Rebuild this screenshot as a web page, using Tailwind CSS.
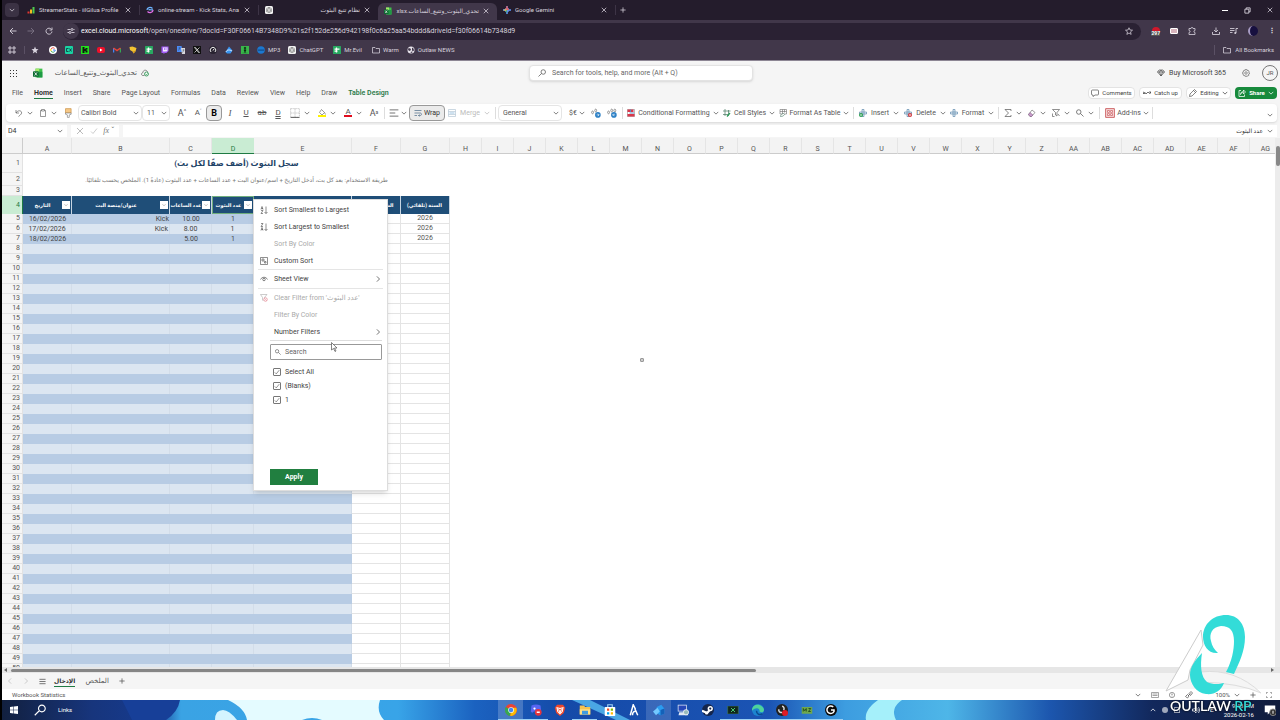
<!DOCTYPE html>
<html lang="en">

<head>
    <meta charset="UTF-8">
    <meta name="viewport" content="width=device-width, initial-scale=1.0">
    <title>تحدي_البثوث_وتتبع_الساعات.xlsx</title>
    <script src="https://cdn.jsdelivr.net/npm/@tailwindcss/browser@4"></script>
</head>

<body class="h-screen overflow-hidden flex flex-col relative bg-[#f5f5f5] text-[#555] text-[7px] leading-[10px] font-['Roboto','Noto_Sans','DejaVu_Sans',sans-serif] border-l-2 border-black">

    <!-- Icons -->
    <svg class="hidden">
        <symbol id="chev" viewBox="0 0 16 16"><path d="M2 5l6 6 6-6" fill="none" stroke="currentColor" stroke-width="2" /></symbol>
        <symbol id="right" viewBox="0 0 16 16"><path d="M5 1l7 7-7 7" fill="none" stroke="currentColor" stroke-width="2" /></symbol>
        <symbol id="left" viewBox="0 0 16 16"><path d="M11 1L4 8l7 7" fill="none" stroke="currentColor" stroke-width="2" /></symbol>
        <symbol id="close" viewBox="0 0 16 16"><path d="M2 2l12 12M14 2L2 14" stroke="currentColor" stroke-width="2" /></symbol>
        <symbol id="plus" viewBox="0 0 16 16"><path d="M8 1v14M1 8h14" stroke="currentColor" stroke-width="2" /></symbol>
        <symbol id="search" viewBox="0 0 16 16"><path d="M9 9l6 6M10 6a4.500 4.500 0 1 1-9 0a4.500 4.500 0 1 1 9 0z" fill="none" stroke="currentColor" stroke-width="1.500" /></symbol>
        <symbol id="searchl" viewBox="0 0 16 16"><path d="M7 9l-6 6M15 6a4.500 4.500 0 1 1-9 0a4.500 4.500 0 1 1 9 0z" fill="none" stroke="currentColor" stroke-width="1.500" /></symbol>
        <symbol id="back" viewBox="0 0 16 16"><path d="M15 8H2M8 2L2 8l6 6" fill="none" stroke="currentColor" stroke-width="1.800" /></symbol>
        <symbol id="fwd" viewBox="0 0 16 16"><path d="M1 8h13M8 2l6 6-6 6" fill="none" stroke="currentColor" stroke-width="1.800" /></symbol>
        <symbol id="reload" viewBox="0 0 16 16"><path d="M13 5A6 6 0 1 0 14 9M14 1v5H9" fill="none" stroke="currentColor" stroke-width="1.800" /></symbol>
        <symbol id="tune" viewBox="0 0 16 16"><path d="M1 5h6M13 5h2M1 11h3M9 11h6M12 5a2 2 0 1 1-4 0a2 2 0 1 1 4 0zM8 11a2 2 0 1 1-4 0a2 2 0 1 1 4 0z" fill="none" stroke="currentColor" stroke-width="1.800" /></symbol>
        <symbol id="grid4" viewBox="0 0 16 16"><path d="M2 2h4v4H2zM10 2h4v4h-4zM2 10h4v4H2zM10 10h4v4h-4z" fill="none" stroke="currentColor" stroke-width="1.800" /></symbol>
        <symbol id="star" viewBox="0 0 16 16"><path d="M8 1l2 5 5 .4-4 3.400 1.300 5L8 12l-4.300 2.800 1.300-5-4-3.400L6 6z" fill="currentColor" /></symbol>
        <symbol id="staro" viewBox="0 0 16 16"><path d="M8 1.500l2 4.500 5 .4-4 3.400 1.300 5L8 12l-4.300 2.800 1.300-5-4-3.400L6 6z" fill="none" stroke="currentColor" stroke-width="1.500" /></symbol>
        <symbol id="folder" viewBox="0 0 16 16"><path d="M1 3h5l2 2h7v9H1z" fill="none" stroke="currentColor" stroke-width="1.500" /></symbol>
        <symbol id="globe" viewBox="0 0 16 16"><circle cx="8" cy="8" r="7" fill="#e8e4ec" /><path d="M3 4l4 1 1 3-3 2-3-2zM10 3l3 2 1 4-3 2-1-3zM7 12l3-1 1 2-3 1z" fill="#41374a" /></symbol>
        <symbol id="stats" viewBox="0 0 16 16"><path d="M1 11h4v4H1z" fill="#e3342f" /><path d="M6 7h4v8H6z" fill="#f5b921" /><path d="M11 2h4v13h-4z" fill="#4ec94e" /></symbol>
        <symbol id="gpt" viewBox="0 0 16 16"><rect width="16" height="16" rx="3" fill="#f1f1f1" /><path d="M8 2.500l4.800 2.700v5.600L8 13.500l-4.800-2.700V5.200zM8 5l2.600 1.500v3L8 11 5.400 9.500v-3zM8 2.500V5M12.800 10.800L10.600 9.500M3.200 10.800l2.200-1.300" fill="none" stroke="#555" stroke-width="1" /></symbol>
        <symbol id="sync" viewBox="0 0 16 16"><path d="M2 8c0-5 7-7 11-3M5 8c3-3 6 2 9-1" fill="none" stroke="#6db4ff" stroke-width="2.500" /><path d="M14 8c0 5-7 7-11 3" fill="none" stroke="#e26ee8" stroke-width="2.500" /></symbol>
        <symbol id="xl" viewBox="0 0 16 16"><path d="M4 1h11v14H4z" fill="#3fc14b" /><path d="M4 1h6v5H4z" fill="#a5e86a" /><path d="M9 6h6v9H6z" fill="#1e9a45" /><rect y="5" width="9" height="9" rx="1" fill="#0e6b33" /><path d="M2.500 7l4 5M6.500 7l-4 5" stroke="#fff" stroke-width="1.300" /></symbol>
        <symbol id="gem" viewBox="0 0 16 16"><path d="M8 0c.6 5 3 7.400 8 8-5 .6-7.400 3-8 8-.6-5-3-7.400-8-8 5-.6 7.400-3 8-8z" fill="#5b93f5" stroke="#5b93f5" stroke-width="2" /><path d="M8 0c.6 5 2 6 4 7L8 8 5 6c2-1 2.600-3 3-6z" fill="#ee5b58" stroke="#ee5b58" /><path d="M0 8l5-1.500L8 8l-3 2z" fill="#f6c035" /><path d="M8 16c-.4-3-1-4-3-6l3-2z" fill="#44b266" /></symbol>
        <symbol id="google" viewBox="0 0 16 16"><circle cx="8" cy="8" r="8" fill="#fff" /><path d="M4 6a4.500 4.500 0 0 1 7-1.200" fill="none" stroke="#ea4335" stroke-width="2" /><path d="M4 6a4.500 4.500 0 0 0 0 4" fill="none" stroke="#fbbc05" stroke-width="2" /><path d="M4 10a4.500 4.500 0 0 0 7 1.200" fill="none" stroke="#34a853" stroke-width="2" /><path d="M11 11.200A4.500 4.500 0 0 0 12.500 8H8" fill="none" stroke="#4285f4" stroke-width="2" /></symbol>
        <symbol id="canvas" viewBox="0 0 16 16"><rect width="16" height="16" rx="2" fill="#19d3a2" /><path d="M7 5H3v6h4M9 5l4 6M13 5l-4 6" fill="none" stroke="#123" stroke-width="1.500" /></symbol>
        <symbol id="kick" viewBox="0 0 16 16"><rect width="16" height="16" fill="#22e01c" /><path d="M3 2h4v4h2V4h4v3h-2v2h2v4H9v-3H7v4H3z" fill="#101510" /></symbol>
        <symbol id="yt" viewBox="0 0 16 16"><rect y="2" width="16" height="12" rx="4" fill="#f0102a" /><path d="M6 5l5 3-5 3z" fill="#fff" /></symbol>
        <symbol id="gmail" viewBox="0 0 16 16"><path d="M1 13V4" stroke="#4285f4" stroke-width="3" /><path d="M15 13V4" stroke="#34a853" stroke-width="3" /><path d="M1 4l7 5 7-5" fill="none" stroke="#ea4335" stroke-width="3" /></symbol>
        <symbol id="keep" viewBox="0 0 16 16"><path d="M1 2l6-1 8 3-2 7-4 4-2-4-5-3z" fill="#f3c332" /><path d="M9 10l4 1-4 4z" fill="#c98a16" /></symbol>
        <symbol id="sheet" viewBox="0 0 16 16"><rect width="16" height="16" rx="1" fill="#28a961" /><path d="M3 6h10M7 3v10M3 10h6" stroke="#fff" stroke-width="2.500" /></symbol>
        <symbol id="twitch" viewBox="0 0 16 16"><path d="M1 1h14v9l-4 4H8l-3 2v-2H1z" fill="#a15bf5" /><path d="M4 3h9v6l-2 2H4z" fill="#f2e9ff" /><path d="M7 4v4M10 4v4" stroke="#a15bf5" stroke-width="1.500" /></symbol>
        <symbol id="trans" viewBox="0 0 16 16"><path d="M0 0h9l3 12H0z" fill="#4a8af4" /><path d="M8 4h8v12H10z" fill="#d8d8de" /><path d="M3 4h4M5 3c0 4-1 5-3 6M11 8h4M13 7c0 3-1 5-2 6" fill="none" stroke="#345" stroke-width="1" /></symbol>
        <symbol id="xcom" viewBox="0 0 16 16"><rect width="16" height="16" fill="#111" /><path d="M3 3l8 10h2L5 3zM13 3L3 13" fill="none" stroke="#fff" stroke-width="1.300" /></symbol>
        <symbol id="arc" viewBox="0 0 16 16"><circle cx="8" cy="8" r="8" fill="#282230" /><path d="M4 12a5.500 5.500 0 1 1 8 0M8 9l2-3" fill="none" stroke="#eee" stroke-width="2" /></symbol>
        <symbol id="cloudb" viewBox="0 0 16 16"><path d="M1 12l7-11 7 8-4 6H4z" fill="#3793f0" /><path d="M2 12c2-5 7-5 12-2" fill="none" stroke="#d5eaff" stroke-width="2" /></symbol>
        <symbol id="person" viewBox="0 0 16 16"><rect width="16" height="16" fill="#39b54a" /><path d="M8 2a2 2 0 1 1 0 4a2 2 0 1 1 0-4zM6 7h4v3H9v3H7v-3H6zM3 14h10" fill="#0d2a12" stroke="#0d2a12" stroke-width=".5" /></symbol>
        <symbol id="mp3" viewBox="0 0 16 16"><circle cx="8" cy="8" r="7.500" fill="#1b78d0" /><path d="M3 8h2M7 8h2M11 8h2" stroke="#0a2747" stroke-width="2.500" /></symbol>
        <symbol id="undo" viewBox="0 0 16 16"><path d="M2 2v6h6M2 8c3-5 9-6 11-2 1 3-1 5-6 9" fill="none" stroke="currentColor" stroke-width="1.300" /></symbol>
        <symbol id="clip" viewBox="0 0 16 16"><path d="M5 3H3v12h10V3h-2M5 1h6v3H5z" fill="none" stroke="currentColor" stroke-width="1.200" /></symbol>
        <symbol id="brush" viewBox="0 0 16 16"><path d="M4 1h9v7H4z" fill="#f6c887" stroke="#c68a3c" /><path d="M4 8h9v2l-3 1v4H7v-4L4 10z" fill="#fff" stroke="#777" /></symbol>
        <symbol id="border" viewBox="0 0 16 16"><path d="M1 1h14v14H1zM8 1v14M1 8h14" fill="none" stroke="#aaa" stroke-dasharray="2 1" /><path d="M1 15h14" stroke="#555" stroke-width="1.500" /></symbol>
        <symbol id="fill" viewBox="0 0 16 16"><path d="M0 12h16v4H0z" fill="#fff200" /><path d="M7 1l6 6-5 5-5-5zM13 7l2 4" fill="#fff" stroke="#666" stroke-width="1.300" /></symbol>
        <symbol id="align" viewBox="0 0 16 16"><path d="M1 3h14M1 8h9M1 13h14" stroke="currentColor" stroke-width="1.300" /></symbol>
        <symbol id="wrap" viewBox="0 0 16 16"><path d="M1 3h14M1 8h11c4 0 4 5 0 5H9M11 11l-2 2 2 2M1 13h5" fill="none" stroke="#4a6a88" stroke-width="1.400" /></symbol>
        <symbol id="merge" viewBox="0 0 16 16"><path d="M1 1h14v14H1zM1 5h14M1 11h14" fill="none" stroke="#b5c7d5" stroke-width="1.400" /><path d="M3 8h10" stroke="#9cc3e0" stroke-width="2" /></symbol>
        <symbol id="dec" viewBox="0 0 16 16"><path d="M1 7c0-3 3-3 3 0s-3 3-3 0M6 4c0-3 3-3 3 0s-3 3-3 0" fill="none" stroke="#777" stroke-width="1.200" /><circle cx="11" cy="11" r="4.500" fill="#2b7fc4" /><path d="M9 11h4M11 9l2 2-2 2" fill="none" stroke="#fff" /></symbol>
        <symbol id="inc" viewBox="0 0 16 16"><path d="M1 7c0-3 3-3 3 0s-3 3-3 0M6 4c0-3 3-3 3 0s-3 3-3 0M11 4c0-3 3-3 3 0s-3 3-3 0" fill="none" stroke="#777" stroke-width="1.200" /><circle cx="11" cy="11" r="4.500" fill="#2b7fc4" /><path d="M13 11H9M11 9l-2 2 2 2" fill="none" stroke="#fff" /></symbol>
        <symbol id="cond" viewBox="0 0 16 16"><path d="M1 1h14v14H1z" fill="#fff" stroke="#777" /><path d="M1 1h12v5H1zM1 10h14v5H1z" fill="#d8384c" /><path d="M5 8h9M7 1v5" stroke="#5c8dc0" stroke-width="2" /></symbol>
        <symbol id="cells" viewBox="0 0 16 16"><path d="M4 0v14M11 2v12M0 4h15M0 11h12" fill="none" stroke="#54806c" stroke-width="1.500" /><path d="M8 15l6-7" stroke="#2e9c5b" stroke-width="2.500" /></symbol>
        <symbol id="ftable" viewBox="0 0 16 16"><path d="M2 1h13v9H2zM2 5h13M7 1v9M11 1v6" fill="none" stroke="#777" stroke-width="1.300" /><path d="M3 15c0-4 3-5 6-6l2 2c-2 3-4 4-8 4z" fill="#fff" stroke="#54806c" stroke-width="1.300" /></symbol>
        <symbol id="cross" viewBox="0 0 16 16"><path d="M6 1h4v14H6zM1 6h14v4H1z" fill="#e6f1fa" stroke="#5985a8" stroke-width="1.300" /></symbol>
        <symbol id="insert" viewBox="0 0 16 16"><use href="#cross" /><circle cx="4" cy="12" r="4" fill="#2a9d50" /><path d="M4 10v4M2 12h4" stroke="#fff" /></symbol>
        <symbol id="delete" viewBox="0 0 16 16"><use href="#cross" /><circle cx="12" cy="12" r="4" fill="#d13438" /><path d="M10 10l4 4M14 10l-4 4" stroke="#fff" /></symbol>
        <symbol id="sum" viewBox="0 0 16 16"><path d="M14 4V1H2l7 7-7 7h12v-3" fill="none" stroke="currentColor" stroke-width="1.400" /></symbol>
        <symbol id="eraser" viewBox="0 0 16 16"><path d="M8 2l6 5-7 8H4l-3-4z" fill="#fff" stroke="#666" stroke-width="1.300" /><path d="M4 7l6 5-3 3H4l-3-4z" fill="#c79ac9" stroke="#7c5a80" /></symbol>
        <symbol id="sortf" viewBox="0 0 16 16"><path d="M1 1h14l-5 6v7l-3-2V7zM1 9v6h4M12 10l3 4" fill="none" stroke="currentColor" stroke-width="1.300" /></symbol>
        <symbol id="addin" viewBox="0 0 16 16"><path d="M1 1h14v14H1z" fill="#f8dede" stroke="#c4474a" stroke-width="1.300" /><path d="M4 4h3v3H4zM9 4h3v3H9zM4 9h3v3H4zM9 9h3v3H9z" fill="#fff" stroke="#c4474a" /></symbol>
        <symbol id="diamond" viewBox="0 0 16 16"><path d="M4 2h8l3 4-7 8-7-8zM1 6h14M5 6l3 8 3-8-3-4z" fill="none" stroke="currentColor" stroke-width="1.300" /></symbol>
        <symbol id="gear" viewBox="0 0 16 16"><path d="M6.500 1h3l.5 2 2-.8 2 2.300-1 2 2 1v2l-2 .8.8 2.200-2.300 1.800-1.700-1-.8 1.700h-2l-.8-2-2.200.8-1.800-2.300 1-1.700L1 9V7l2-.8-.8-2L4.500 2.500l1.500.8z" fill="none" stroke="currentColor" stroke-width="1.200" /><circle cx="8" cy="8" r="2.500" fill="none" stroke="currentColor" stroke-width="1.200" /></symbol>
        <symbol id="bubble" viewBox="0 0 16 16"><path d="M3 2h10q2 0 2 2v6q0 2-2 2H8l-4 3v-3H3q-2 0-2-2V4q0-2 2-2z" fill="none" stroke="currentColor" stroke-width="1.300" /></symbol>
        <symbol id="catch" viewBox="0 0 16 16"><path d="M0 9l3-3 3 4 4-4 3 3 3-3M0 5v4h4M16 10V6h-4" fill="none" stroke="currentColor" stroke-width="1.500" /></symbol>
        <symbol id="pencil" viewBox="0 0 16 16"><path d="M1 15l1-5 9-9 4 4-9 9zM9 3l4 4" fill="none" stroke="currentColor" stroke-width="1.300" /></symbol>
        <symbol id="share" viewBox="0 0 16 16"><path d="M6 3H2v12h11v-4M5 11c0-4 3-6 6-6V2l4 4-4 4V7c-3 0-5 1-6 4z" fill="none" stroke="currentColor" stroke-width="1.500" /></symbol>
        <symbol id="cloudok" viewBox="0 0 16 16"><path d="M7 13H4C0 13 0 8 4 7c0-6 8-6 9-1" fill="none" stroke="#555" stroke-width="1.300" /><circle cx="11" cy="10" r="4" fill="#fff" stroke="#188a42" stroke-width="1.500" /><path d="M9 10l2 1.500L13 9" fill="none" stroke="#188a42" stroke-width="1.500" /></symbol>
        <symbol id="check" viewBox="0 0 16 16"><path d="M2 9l4 4 8-10" fill="none" stroke="currentColor" stroke-width="1.500" /></symbol>
        <symbol id="az" viewBox="0 0 16 16"><path d="M12 1v14M9 12l3 3 3-3M2 7l2-6 2 6M3 5h3M2 9h4l-4 6h4" fill="none" stroke="currentColor" stroke-width="1.200" /></symbol>
        <symbol id="za" viewBox="0 0 16 16"><path d="M12 1v14M9 12l3 3 3-3M2 1h4L2 7h4M2 15l2-6 2 6M3 13h3" fill="none" stroke="currentColor" stroke-width="1.200" /></symbol>
        <symbol id="csort" viewBox="0 0 16 16"><path d="M1 1h14v14H1zM4 4h4v4H4zM9 9h3v3H9z" fill="none" stroke="currentColor" stroke-width="1.200" /></symbol>
        <symbol id="eye" viewBox="0 0 16 16"><path d="M1 9c3-6 11-6 14 0" fill="none" stroke="currentColor" stroke-width="1.300" /><circle cx="8" cy="9" r="2.500" fill="none" stroke="currentColor" stroke-width="1.300" /></symbol>
        <symbol id="clearf" viewBox="0 0 16 16"><path d="M1 1h13L9 7v2M7 14l-2-2V7L1 1" fill="none" stroke="#aaa" stroke-width="1.200" /><circle cx="11" cy="11" r="3.500" fill="#fff" stroke="#e07a86" stroke-width="1.300" /><path d="M9 9l4 4" stroke="#e07a86" /></symbol>
        <symbol id="menu" viewBox="0 0 16 16"><path d="M1 3h14M1 8h14M1 13h14" stroke="currentColor" stroke-width="1.800" /></symbol>
        <symbol id="puzzle" viewBox="0 0 16 16"><path d="M2 3h4c0-3 4-3 4 0h4v4c-3 0-3 4 0 4v4H2v-4c3 0 3-4 0-4z" fill="none" stroke="currentColor" stroke-width="1.600" /></symbol>
        <symbol id="down" viewBox="0 0 16 16"><path d="M8 1v9M4 6l4 4 4-4M1 10v5h14v-5" fill="none" stroke="currentColor" stroke-width="1.700" /></symbol>
        <symbol id="music" viewBox="0 0 16 16"><path d="M0 3h9M0 7h9M0 11h5M12 12V3h4" fill="none" stroke="currentColor" stroke-width="1.700" /><circle cx="10.500" cy="12" r="2" fill="currentColor" /></symbol>
        <symbol id="restore" viewBox="0 0 16 16"><path d="M2 5h9v9H2zM5 5V2h9v9h-3" fill="none" stroke="currentColor" stroke-width="2" /></symbol>
        <symbol id="sound" viewBox="0 0 16 16"><path d="M1 6h3l4-4v12l-4-4H1zM11 5q3 3 0 6M13 2q5 6 0 12" fill="none" stroke="currentColor" stroke-width="1.500" /></symbol>
        <symbol id="win" viewBox="0 0 16 16"><path d="M0 2l7-1v6.500H0zM8 1l8-1v7.500H8zM0 8.500h7V15l-7-1zM8 8.500h8V16l-8-1z" fill="#fff" /></symbol>
    </svg>

    <!-- Browser tabs -->
    <header class="shrink-0 bg-[#41374a] text-[#d8d3de]">
        <div class="h-5 bg-[#241c2c] flex items-center whitespace-nowrap text-[6px]">
            <button aria-label="Search tabs" class="ml-[3px] mr-0.5 size-3.5 rounded bg-[#3b3244] flex items-center justify-center"><svg class="size-1.5"><use href="#chev" /></svg></button>
            <div class="w-[119px] pl-1.5 pr-2 flex items-center gap-1 border-r border-[#3d3446]">
                <svg class="size-2"><use href="#stats" /></svg><span class="flex-1">StreamerStats - iilGilua Profile</span><button aria-label="Close"><svg class="size-1.5"><use href="#close" /></svg></button>
            </div>
            <div class="w-[119px] pl-1.5 pr-2 flex items-center gap-1 border-r border-[#3d3446]">
                <svg class="size-2"><use href="#sync" /></svg><span class="flex-1">online-stream - Kick Stats, Ana</span><button aria-label="Close"><svg class="size-1.5"><use href="#close" /></svg></button>
            </div>
            <div class="w-[119px] pl-1.5 pr-2 flex items-center gap-1">
                <svg class="size-2"><use href="#gpt" /></svg><span dir="rtl" class="flex-1">نظام تتبع البثوث</span><button aria-label="Close"><svg class="size-1.5"><use href="#close" /></svg></button>
            </div>
            <div class="w-[119px] h-[17px] self-end rounded-t-md bg-[#41374a] pl-1.5 pr-2 pb-0.5 flex items-center gap-1">
                <svg class="size-2"><use href="#xl" /></svg><span dir="rtl" class="flex-1">تحدي_البثوث_وتتبع_الساعات.xlsx</span><button aria-label="Close"><svg class="size-1.5"><use href="#close" /></svg></button>
            </div>
            <div class="w-[119px] pl-1.5 pr-2 flex items-center gap-1 border-r border-[#3d3446]">
                <svg class="size-2"><use href="#gem" /></svg><span class="flex-1">Google Gemini</span><button aria-label="Close"><svg class="size-1.5"><use href="#close" /></svg></button>
            </div>
            <button aria-label="New tab" class="ml-1"><svg class="size-1.5"><use href="#plus" /></svg></button>
            <div class="ml-auto flex items-center gap-4 pr-[7px]">
                <button aria-label="Minimize" class="w-1.5 h-px bg-white"></button>
                <button aria-label="Restore"><svg class="size-[7px]"><use href="#restore" /></svg></button>
                <button aria-label="Close window"><svg class="size-1.5"><use href="#close" /></svg></button>
            </div>
        </div>

        <!-- Address bar -->
        <div class="h-[22px] flex items-center pl-[7px] pr-1 gap-2.5">
            <button aria-label="Back"><svg class="size-2"><use href="#back" /></svg></button>
            <button aria-label="Forward" class="text-[#7d7486]"><svg class="size-2"><use href="#fwd" /></svg></button>
            <button aria-label="Reload"><svg class="size-2"><use href="#reload" /></svg></button>
            <div class="flex-1 h-[17px] rounded-full bg-[#2a2133] flex items-center pr-2">
                <span class="size-4 rounded-full bg-[#41374a] flex items-center justify-center mr-0.5"><svg class="size-2"><use href="#tune" /></svg></span>
                <span class="flex-1"><span class="text-white">excel.cloud.microsoft</span>/open/onedrive/?docId=F30F06614B7348D9%21s2f152de256d942198f0c6a25aa54bddd&amp;driveId=f30f06614b7348d9</span>
                <button aria-label="Bookmark"><svg class="size-2"><use href="#staro" /></svg></button>
            </div>
            <span class="flex flex-col items-center text-[5px] leading-[5px] font-bold"><span class="w-2 h-1 bg-[#d0182b] rounded-t"></span><span class="bg-[#555] text-white">297</span></span>
            <span class="w-2 h-1.5 bg-[#d8b4bd] border border-white rounded-[1px]"></span>
            <button aria-label="Extensions" class="pr-1.5"><svg class="size-2"><use href="#puzzle" /></svg></button>
            <button aria-label="Downloads"><svg class="size-2"><use href="#down" /></svg></button>
            <button aria-label="Media"><svg class="size-2"><use href="#music" /></svg></button>
            <span class="size-2.5 rounded-full bg-[#17103f] border-l-2 border-[#a79bc4]"></span>
            <button aria-label="More" class="w-2 font-bold">⋮</button>
        </div>

        <!-- Bookmarks -->
        <nav class="h-[18px] pb-0.5 flex items-center pl-1.5 pr-1.5 gap-2 text-[6px]">
            <svg class="size-2"><use href="#grid4" /></svg>
            <span class="w-px h-2 bg-[#5b5165] -mr-1"></span>
            <svg class="size-2 mx-0.5"><use href="#star" /></svg>
            <svg class="size-2"><use href="#google" /></svg>
            <svg class="size-2"><use href="#canvas" /></svg>
            <svg class="size-2"><use href="#kick" /></svg>
            <svg class="size-2"><use href="#yt" /></svg>
            <svg class="size-2"><use href="#gmail" /></svg>
            <svg class="size-2"><use href="#keep" /></svg>
            <svg class="size-2"><use href="#sheet" /></svg>
            <svg class="size-2"><use href="#twitch" /></svg>
            <svg class="size-2"><use href="#trans" /></svg>
            <svg class="size-2"><use href="#xcom" /></svg>
            <svg class="size-2"><use href="#arc" /></svg>
            <svg class="size-2"><use href="#cloudb" /></svg>
            <svg class="size-2"><use href="#person" /></svg>
            <a href="#" class="flex items-center gap-[3px]"><svg class="size-2"><use href="#mp3" /></svg>MP3</a>
            <a href="#" class="flex items-center gap-[3px]"><svg class="size-2"><use href="#gpt" /></svg>ChatGPT</a>
            <a href="#" class="flex items-center gap-[3px] pl-0.5"><svg class="size-2"><use href="#sheet" /></svg>Mr.Evil</a>
            <a href="#" class="flex items-center gap-[3px] pl-0.5"><svg class="size-2"><use href="#folder" /></svg>Warm</a>
            <a href="#" class="flex items-center gap-[3px]"><svg class="size-2"><use href="#globe" /></svg>Outlaw NEWS</a>
            <a href="#" class="ml-auto flex items-center gap-1 border-l border-[#5b5165] pl-2"><svg class="size-2"><use href="#folder" /></svg>All Bookmarks</a>
        </nav>
    </header>

    <!-- Excel title bar -->
    <div class="shrink-0 h-[25px] border-t border-[#8d8694] flex items-center">
        <div class="flex-1 flex items-center pl-2">
            <button aria-label="Apps" class="grid grid-cols-3 gap-0.5 mr-4"><i class="size-px bg-[#333]"></i><i class="size-px bg-[#333]"></i><i class="size-px bg-[#333]"></i><i class="size-px bg-[#333]"></i><i class="size-px bg-[#333]"></i><i class="size-px bg-[#333]"></i><i class="size-px bg-[#333]"></i><i class="size-px bg-[#333]"></i><i class="size-px bg-[#333]"></i></button>
            <svg class="size-2.5 mr-3"><use href="#xl" /></svg>
            <span dir="rtl" class="w-[82px] whitespace-nowrap">تحدي_البثوث_وتتبع_الساعات</span>
            <svg class="size-2 ml-1"><use href="#cloudok" /></svg>
        </div>
        <label class="w-56 h-4 bg-white border border-[#e3e3e3] rounded-sm shadow-sm flex items-center px-2 gap-1.5">
            <svg class="size-2"><use href="#searchl" /></svg>
            <input aria-label="Search" placeholder="Search for tools, help, and more (Alt + Q)" class="flex-1 outline-none placeholder:text-[#666]">
        </label>
        <div class="flex-1 flex items-center justify-end gap-4 pl-1.5 pr-0.5">
            <a href="#" class="flex items-center gap-1 text-[#444]"><svg class="size-2"><use href="#diamond" /></svg>Buy Microsoft 365</a>
            <button aria-label="Settings"><svg class="size-2"><use href="#gear" /></svg></button>
            <button class="-ml-1 size-4 rounded-full border border-[#777] text-[6px]">JR</button>
        </div>
    </div>

    <!-- Menu tabs -->
    <nav class="shrink-0 h-4 flex items-center pl-2.5 pr-[3px] gap-[11px]">
        <a href="#">File</a>
        <a href="#" class="font-bold text-[#333] border-b border-[#1f7a43]">Home</a>
        <a href="#">Insert</a>
        <a href="#">Share</a>
        <a href="#">Page Layout</a>
        <a href="#">Formulas</a>
        <a href="#">Data</a>
        <a href="#">Review</a>
        <a href="#">View</a>
        <a href="#">Help</a>
        <a href="#">Draw</a>
        <a href="#" class="font-semibold text-[#2c7a4b]">Table Design</a>
        <div class="ml-auto flex gap-1 text-[#444] text-[6px]">
            <button class="w-[47px] h-3 bg-white border border-[#e3e3e3] rounded-sm flex items-center justify-center gap-[3px]"><svg class="size-2"><use href="#bubble" /></svg>Comments</button>
            <button class="w-[43px] h-3 bg-white border border-[#e3e3e3] rounded-sm flex items-center justify-center gap-[3px]"><svg class="size-2"><use href="#catch" /></svg>Catch up</button>
            <button class="w-[45px] h-3 bg-white border border-[#e3e3e3] rounded-sm flex items-center justify-center gap-[3px]"><svg class="size-2"><use href="#pencil" /></svg>Editing<svg class="size-1.5"><use href="#chev" /></svg></button>
            <button class="w-[42px] h-3 bg-[#178a3c] text-white font-bold rounded-sm flex items-center justify-center gap-[3px]"><svg class="size-2"><use href="#share" /></svg>Share<svg class="size-1.5"><use href="#chev" /></svg></button>
        </div>
    </nav>

    <!-- Ribbon -->
    <div class="shrink-0 mt-[3px] ml-1 mr-[3px] h-[18px] bg-white rounded shadow-sm flex items-center pl-1.5 whitespace-nowrap">
        <button aria-label="Undo" class="w-6 flex items-center justify-center gap-1"><svg class="size-2"><use href="#undo" /></svg><svg class="size-1.5"><use href="#chev" /></svg></button>
        <button aria-label="Paste" class="w-6 flex items-center justify-center gap-1"><svg class="size-2"><use href="#clip" /></svg><svg class="size-1.5"><use href="#chev" /></svg></button>
        <button aria-label="Format painter" class="w-4 flex justify-center mr-0.5"><svg class="size-2.5"><use href="#brush" /></svg></button>
        <label class="w-16 h-4 grid grid-cols-[1fr_8px] items-center border border-[#e5e5e5] rounded-sm pl-0.5">
            <select aria-label="Font" class="col-start-1 col-span-2 row-start-1 appearance-none"><option>Calibri Bold</option></select><svg class="size-1.5 col-start-2 row-start-1 pointer-events-none"><use href="#chev" /></svg>
        </label>
        <label class="w-7 h-4 grid grid-cols-[1fr_8px] items-center border border-[#e5e5e5] rounded-sm pl-1 mr-1">
            <select aria-label="Font size" class="col-start-1 col-span-2 row-start-1 appearance-none"><option>11</option></select><svg class="size-1.5 col-start-2 row-start-1 pointer-events-none"><use href="#chev" /></svg>
        </label>
        <button class="w-4 text-[9px]">A<sup class="text-[6px]">^</sup></button>
        <button class="w-4 text-[8px]">A<sup class="text-[5px]">˅</sup></button>
        <button class="w-4 h-4 border border-[#999] bg-[#ebebeb] rounded-sm font-bold text-[9px] text-black">B</button>
        <button class="w-4 text-[9px] italic font-['Liberation_Serif',serif]">I</button>
        <button class="w-4 text-[8px] underline">U</button>
        <button class="w-4 text-[8px] line-through">ab</button>
        <button class="w-4 text-[8px] underline decoration-double">D</button>
        <button aria-label="Borders" class="w-7 flex items-center justify-center gap-1"><svg class="size-2.5"><use href="#border" /></svg><svg class="size-1.5"><use href="#chev" /></svg></button>
        <button aria-label="Fill color" class="w-[26px] flex items-center justify-center gap-1"><svg class="size-2"><use href="#fill" /></svg><svg class="size-1.5"><use href="#chev" /></svg></button>
        <button aria-label="Font color" class="w-[26px] flex items-center justify-center gap-1"><span class="text-[8px] leading-[6px] border-b-2 border-[#e00b1c] px-px">A</span><svg class="size-1.5"><use href="#chev" /></svg></button>
        <button class="w-4 text-[9px]">A<sup class="text-[5px]">a</sup></button>
        <span class="w-px h-3 bg-[#ddd] mx-0.5"></span>
        <button aria-label="Align" class="w-[22px] flex items-center justify-center gap-0.5"><svg class="size-2.5"><use href="#align" /></svg><svg class="size-1.5"><use href="#chev" /></svg></button>
        <button class="w-9 h-4 border border-[#999] bg-[#ebebeb] rounded-sm flex items-center justify-center gap-0.5 text-[#333]"><svg class="size-2"><use href="#wrap" /></svg>Wrap</button>
        <button class="w-12 flex items-center justify-center gap-1 text-[#bbb]"><svg class="size-2"><use href="#merge" /></svg>Merge<svg class="size-1.5"><use href="#chev" /></svg></button>
        <span class="w-px h-3 bg-[#ddd] mx-0.5"></span>
        <label class="w-16 h-4 grid grid-cols-[1fr_8px] items-center border border-[#e5e5e5] rounded-sm pl-1 mr-1">
            <select aria-label="Number format" class="col-start-1 col-span-2 row-start-1 appearance-none"><option>General</option></select><svg class="size-1.5 col-start-2 row-start-1 pointer-events-none"><use href="#chev" /></svg>
        </label>
        <button class="w-[22px] flex items-center justify-center gap-0.5">$€<svg class="size-1.5"><use href="#chev" /></svg></button>
        <button aria-label="Decrease decimal" class="w-4 flex justify-center"><svg class="size-2.5"><use href="#dec" /></svg></button>
        <button aria-label="Increase decimal" class="w-4 flex justify-center"><svg class="size-2.5"><use href="#inc" /></svg></button>
        <span class="w-px h-3 bg-[#ddd] mx-0.5"></span>
        <button class="w-24 flex items-center justify-center gap-[3px]"><svg class="size-2"><use href="#cond" /></svg>Conditional Formatting<svg class="size-1.5"><use href="#chev" /></svg></button>
        <button class="w-14 flex items-center justify-center gap-[3px]"><svg class="size-2"><use href="#cells" /></svg>Cell Styles<svg class="size-1.5"><use href="#chev" /></svg></button>
        <button class="w-[74px] flex items-center justify-center gap-[3px]"><svg class="size-2"><use href="#ftable" /></svg>Format As Table<svg class="size-1.5"><use href="#chev" /></svg></button>
        <span class="w-px h-3 bg-[#ddd] mx-0.5"></span>
        <button class="w-[46px] flex items-center justify-center gap-1"><svg class="size-2"><use href="#insert" /></svg>Insert<svg class="size-1.5"><use href="#chev" /></svg></button>
        <button class="w-[46px] flex items-center justify-center gap-1"><svg class="size-2"><use href="#delete" /></svg>Delete<svg class="size-1.5"><use href="#chev" /></svg></button>
        <button class="w-12 flex items-center justify-center gap-1"><svg class="size-2"><use href="#cross" /></svg>Format<svg class="size-1.5"><use href="#chev" /></svg></button>
        <span class="w-px h-3 bg-[#ddd] mx-0.5"></span>
        <button aria-label="AutoSum" class="w-6 flex items-center justify-center gap-1"><svg class="size-2"><use href="#sum" /></svg><svg class="size-1.5"><use href="#chev" /></svg></button>
        <button aria-label="Clear" class="w-6 flex items-center justify-center gap-1"><svg class="size-2"><use href="#eraser" /></svg><svg class="size-1.5"><use href="#chev" /></svg></button>
        <button aria-label="Sort and filter" class="w-6 flex items-center justify-center gap-1"><svg class="size-2"><use href="#sortf" /></svg><svg class="size-1.5"><use href="#chev" /></svg></button>
        <button aria-label="Find" class="w-6 flex items-center justify-center gap-1"><svg class="size-2"><use href="#search" /></svg><svg class="size-1.5"><use href="#chev" /></svg></button>
        <span class="w-px h-3 bg-[#ddd] mx-0.5"></span>
        <button class="w-[50px] flex items-center justify-center gap-0.5"><svg class="size-2.5"><use href="#addin" /></svg>Add-ins<svg class="size-1.5"><use href="#chev" /></svg></button>
        <span class="w-px h-3 bg-[#ddd]"></span>
        <button aria-label="Ribbon options" class="ml-auto mr-1 mt-1"><svg class="size-1.5"><use href="#chev" /></svg></button>
    </div>

    <!-- Formula bar -->
    <div class="shrink-0 mt-[3px] mb-px h-3 ml-1 mr-[3px] flex gap-1">
        <label class="w-[61px] bg-white flex items-center pl-0.5 pr-1"><input aria-label="Name box" value="D4" class="w-0 flex-1 outline-none text-[#333]"><svg class="size-1.5"><use href="#chev" /></svg></label>
        <div class="w-12 bg-white flex items-center justify-evenly text-[#bbb]"><svg class="size-2"><use href="#close" /></svg><svg class="size-2"><use href="#check" /></svg><i class="text-[#777] font-['Liberation_Serif',serif] text-[8px]">fx ˇ</i></div>
        <label class="flex-1 bg-white flex items-center pr-1 gap-1"><input dir="rtl" aria-label="Formula" value="عدد البثوث" class="flex-1 outline-none text-[#333] text-[6px]"><svg class="size-1.5"><use href="#chev" /></svg></label>
    </div>

    <!-- Sheet -->
    <main class="flex-1 min-h-0 relative overflow-hidden bg-white flex">
        <div class="flex-1 min-w-0 overflow-hidden">
            <table class="table-fixed border-separate border-spacing-0 w-[1280px] whitespace-nowrap">
                <colgroup id="cols">
                    <col class="w-[21px]"><col class="w-[49px]"><col class="w-[98px]"><col class="w-[42px]"><col class="w-[42px]"><col class="w-[98px]"><col class="w-[49px]"><col class="w-[49px]">
                </colgroup>
                <thead>
                    <tr id="letters" class="h-4 bg-[#f3f3f3] align-bottom"></tr>
                </thead>
                <tbody id="rows"></tbody>
            </table>
        </div>
        <div class="w-[5px] bg-[#ececec] pt-2"><div class="w-1 h-5 ml-px rounded bg-[#888]"></div></div>

        <!-- Filter menu -->
        <div class="absolute left-[251px] top-[61px] w-[135px] h-[292px] bg-white shadow-md border border-[#ddd] flex flex-col px-1 pt-px text-[#444]">
            <button class="h-[17px] flex items-center gap-1.5 px-0.5"><svg class="size-2"><use href="#az" /></svg>Sort Smallest to Largest</button>
            <button class="h-[17px] flex items-center gap-1.5 px-0.5"><svg class="size-2"><use href="#za" /></svg>Sort Largest to Smallest</button>
            <button class="h-[17px] flex items-center pl-4 text-[#aaa]">Sort By Color</button>
            <button class="h-[17px] flex items-center gap-1.5 px-0.5"><svg class="size-2"><use href="#csort" /></svg>Custom Sort</button>
            <button class="h-5 border-y border-[#e5e5e5] flex items-center gap-1.5 px-0.5"><svg class="size-2"><use href="#eye" /></svg>Sheet View<svg class="size-1.5 ml-auto"><use href="#right" /></svg></button>
            <button class="h-[17px] flex items-center gap-1.5 px-0.5 text-[#aaa]"><svg class="size-2"><use href="#clearf" /></svg><span>Clear Filter from '<bdi>عدد البثوث</bdi>'</span></button>
            <button class="h-[17px] flex items-center pl-4 text-[#aaa]">Filter By Color</button>
            <button class="h-[17px] flex items-center pl-4 pr-0.5">Number Filters<svg class="size-1.5 ml-auto"><use href="#right" /></svg></button>
            <div class="ml-3 mr-px border-t border-[#ddd] pt-[3px]">
                <label class="h-4 border border-[#999] rounded-[1px] flex items-center gap-1 px-1"><svg class="size-1.5"><use href="#search" /></svg><input aria-label="Search values" placeholder="Search" class="w-0 flex-1 outline-none placeholder:text-[#666]"></label>
            </div>
            <div id="values" class="ml-[15px] mt-[5px] flex-1"></div>
            <button class="ml-3 mb-[5px] w-12 h-4 bg-[#217f40] text-white font-bold">Apply</button>
        </div>

        <!-- Mouse pointer -->
        <svg class="absolute left-[329px] top-[204px] w-[6px] h-[10px]" viewBox="0 0 12 20"><path d="M1 1v15l4-3 3 6 2-1-3-6h5z" fill="#fff" stroke="#444" stroke-width="1.300" /></svg>
        <span class="absolute left-[638px] top-[220px] size-1 rounded-[1px] border border-[#999] bg-[#ccc]"></span>
    </main>

    <!-- Horizontal scrollbar -->
    <div class="shrink-0 h-1.5 bg-[#e6e6e6] flex items-center px-0.5 gap-1 text-[#555]">
        <span class="border-y-2 border-y-transparent border-r-[3px] border-r-[#666]"></span>
        <span class="w-[58.500%] h-[3px] rounded bg-[#868686]"></span>
        <span class="ml-auto border-y-2 border-y-transparent border-l-[3px] border-l-[#666] mr-1"></span>
    </div>

    <!-- Sheet tabs -->
    <nav class="shrink-0 h-4 flex items-center pl-[5px] gap-2.5">
        <button aria-label="Previous" class="text-[#bbb]"><svg class="size-1.5"><use href="#left" /></svg></button>
        <button aria-label="Next" class="text-[#bbb]"><svg class="size-1.5"><use href="#right" /></svg></button>
        <button aria-label="All sheets" class="-mr-0.5"><svg class="size-[7px]"><use href="#menu" /></svg></button>
        <a href="#" class="text-[6px] font-bold text-[#333] border-b border-[#1f7a43]">الإدخال</a>
        <a href="#">الملخص</a>
        <button aria-label="Add sheet"><svg class="size-1.5"><use href="#plus" /></svg></button>
    </nav>

    <!-- Status bar -->
    <div class="shrink-0 h-[11px] bg-white flex items-center justify-between pl-2.5 pr-2 text-[6px]">
        <span>Workbook Statistics</span>
        <div class="flex items-center gap-2.5">
            <svg class="size-1.5"><use href="#chev" /></svg>
            <svg class="w-2 h-1.5" viewBox="0 0 16 12"><path d="M1 1h14v10H1zM3 4h10M3 7h10" fill="none" stroke="#888" stroke-width="1.500" /></svg>
            <svg class="size-1.5" viewBox="0 0 16 16"><circle cx="8" cy="8" r="7" fill="none" stroke="#555" stroke-width="1.500" /><path d="M8 4v5M8 11v1" stroke="#555" stroke-width="2" /></svg>
            <svg class="size-2" viewBox="0 0 16 16"><path d="M1 11l4-4 3 3-3 4zM8 5l4-4 3 3-4 5zM6 10l5-5" fill="none" stroke="#555" stroke-width="1.500" /></svg>
            <span class="ml-3 flex items-center gap-1">100%<svg class="size-1.5"><use href="#chev" /></svg></span>
            <svg class="size-1.5"><use href="#plus" /></svg>
            <svg class="size-1.5" viewBox="0 0 16 16"><path d="M1 5V1h4M11 1h4v4M15 11v4h-4M5 15H1v-4" fill="none" stroke="#555" stroke-width="1.500" /></svg>
        </div>
    </div>

    <!-- Taskbar -->
    <footer class="shrink-0 h-5 relative flex items-center justify-between text-white">
        <svg class="absolute inset-0 w-full h-full" viewBox="0 0 1278 20" preserveAspectRatio="none">
            <defs>
                <linearGradient id="bg">
                    <stop offset="0" stop-color="#12203f" /><stop offset=".07" stop-color="#17357c" /><stop offset=".12" stop-color="#163b90" /><stop offset=".14" stop-color="#3aa3e4" /><stop offset=".31" stop-color="#38a4e8" /><stop offset=".37" stop-color="#1b62c0" /><stop offset=".44" stop-color="#154aa8" /><stop offset=".6" stop-color="#1b54b4" /><stop offset=".66" stop-color="#3d9de0" /><stop offset=".74" stop-color="#4eb6e8" /><stop offset=".82" stop-color="#1c56ae" /><stop offset=".9" stop-color="#12285c" /><stop offset="1" stop-color="#101c3c" />
                </linearGradient>
            </defs>
            <path d="M0 0h1278v20H0z" fill="url(#bg)" />
            <path d="M120 0h58q-2 12-14 20h-34z" fill="#173f98" />
            <path d="M226 0h152q-4 12 4 20h-62q-10-4-20 0h-55q-2-12-19-20z" fill="#e4fbff" />
            <path d="M213 20q0-10 8-10 6 0 14 10z" fill="#d4f4ff" />
            <path d="M588 0l40 20h-14L570 0z" fill="#4aa6e4" />
            <path d="M900 0h-24q-14 10-12 20h30q-6-12 6-20z" fill="#a5f0fa" />
        </svg>
        <div class="relative flex items-center pl-2 gap-4">
            <button aria-label="Start"><svg class="size-2"><use href="#win" /></svg></button>
            <button aria-label="Search"><svg class="size-3"><use href="#searchl" /></svg></button>
            <span class="-ml-1 text-[6px]">Links</span>
        </div>
        <div class="absolute left-[496px] h-5 flex items-center">
            <span class="w-[25px] h-5 flex items-center justify-center bg-white/20 border-b border-[#9bd0f5]"><svg class="size-3" viewBox="0 0 16 16"><circle cx="8" cy="8" r="8" fill="#ea4335" /><path d="M8 8L1 4a8 8 0 0 0 6 12z" fill="#34a853" /><path d="M8 8l-1 8a8 8 0 0 0 8-11H8z" fill="#fbbc05" /><circle cx="8" cy="8" r="3.800" fill="#fff" /><circle cx="8" cy="8" r="3" fill="#4285f4" /></svg></span>
            <span class="w-[25px] h-5 flex items-center justify-center border-b border-[#9bd0f5]"><svg class="size-3" viewBox="0 0 16 16"><path d="M2 2q6-3 12 0l1 8q-3 3-4 0H5q-2 3-4 0z" fill="#5865f2" /><circle cx="6" cy="6" r="1.500" fill="#fff" /><circle cx="11" cy="11" r="4.500" fill="#e5343d" /><path d="M9 11h4" stroke="#fff" stroke-width="2" /></svg></span>
            <span class="w-[24px] flex justify-center"><svg class="size-3" viewBox="0 0 16 16"><path d="M4 1h8l3 4-2 7-5 4-5-4-2-7z" fill="#f0472b" /><path d="M4 5l4 1 4-1-1 5-3 3-3-3zM6 7l2 4 2-4" fill="none" stroke="#fff" stroke-width="1.400" /></svg></span>
            <span class="w-[25px] h-5 flex items-center justify-center border-b border-[#9bd0f5]"><svg class="size-3" viewBox="0 0 16 16"><path d="M1 2h6l1 2h7v10H1z" fill="#f4c451" /><path d="M1 7h14v7H1z" fill="#ffdf83" /><path d="M4 9h8v5H4z" fill="#3f9be0" /></svg></span>
            <span class="w-[25px] flex justify-center"><svg class="size-3" viewBox="0 0 16 16"><path d="M5 4V1h6v3" fill="none" stroke="#9bd0f5" stroke-width="1.500" /><rect x="1" y="4" width="14" height="12" rx="1" fill="#fff" /><path d="M4 6h3v3H4z" fill="#f25022" /><path d="M9 6h3v3H9z" fill="#7fba00" /><path d="M4 11h3v3H4z" fill="#00a4ef" /><path d="M9 11h3v3H9z" fill="#ffb900" /></svg></span>
            <span class="w-[24px] flex justify-center"><svg class="size-3" viewBox="0 0 16 16"><path d="M3 15L7 1l3 6M9 6l4 9M6 15c0-4 2-6 5-5" fill="none" stroke="#fff" stroke-width="2" /></svg></span>
            <span class="w-[25px] h-5 flex items-center justify-center bg-white/15"><svg class="size-3" viewBox="0 0 16 16"><path d="M5 4l6-3 4 5v7l-5 2-6-3z" fill="#2b9cf0" /><path d="M0 10l6-5 3 5-5 5z" fill="#73c8ff" /><path d="M10 8l5-2v7l-5 2z" fill="#1461b8" /></svg></span>
            <span class="w-[24px] flex justify-center"><svg class="size-3" viewBox="0 0 16 16"><path d="M1 1h12v9H1z" fill="#dfe8f5" /><path d="M2 2h10v7H2z" fill="#2748b8" /><path d="M3 11h10l2 4H2z" fill="#dfe8f5" /><circle cx="12" cy="11" r="3.500" fill="#9bb" stroke="#fff" /></svg></span>
            <span class="w-[25px] flex justify-center"><svg class="size-3" viewBox="0 0 16 16"><circle cx="8" cy="8" r="8" fill="#14254c" /><path d="M0 9l7 3 4-5" stroke="#fff" stroke-width="3" fill="none" /><circle cx="11" cy="6" r="3.500" fill="#fff" /><circle cx="11" cy="6" r="1.500" fill="#14254c" /><circle cx="6" cy="12" r="2" fill="#fff" /></svg></span>
            <span class="w-[25px] h-5 flex items-center justify-center border-b border-[#9bd0f5]"><svg class="w-3 h-2" viewBox="0 0 16 12"><path d="M0 0h16v12H0z" fill="#10261c" stroke="#3f7a5a" /><path d="M5 3l6 6M11 3L5 9" stroke="#48c774" stroke-width="1.500" /></svg></span>
            <span class="w-[25px] h-5 flex items-center justify-center border-b border-[#9bd0f5]"><svg class="size-3" viewBox="0 0 16 16"><circle cx="8" cy="8" r="8" fill="#1c84d0" /><path d="M2 3c6-5 14 0 14 5 0 3-4 4-6 2 1-5-5-6-10-1 0-2 0-4 2-6z" fill="#4fd39a" /><path d="M6 9c0 5 4 6 8 4" fill="none" stroke="#0b4a90" stroke-width="2" /></svg></span>
            <span class="w-[24px] h-5 flex items-center justify-center border-b border-[#9bd0f5]"><svg class="size-3" viewBox="0 0 16 16"><circle cx="8" cy="8" r="8" fill="#222" /><path d="M8 3a3 3 0 0 1 2 5M4 7a3 3 0 0 0 4 4" fill="none" stroke="#ddd" stroke-width="2" /><circle cx="12" cy="12" r="4" fill="#e01b24" /></svg></span>
            <span class="w-[25px] h-5 flex items-center justify-center border-b border-[#9bd0f5]"><svg class="size-3" viewBox="0 0 16 16"><path d="M1 4h14v9H1z" fill="#6fa84c" /><path d="M3 10V6l2 3 2-3v4M10 6h3l-3 4h3" fill="none" stroke="#234a1c" stroke-width="1.200" /></svg></span>
            <span class="w-[24px] h-5 flex items-center justify-center border-b border-[#9bd0f5]"><svg class="size-3" viewBox="0 0 16 16"><circle cx="8" cy="8" r="8" fill="#0c0c0c" /><path d="M11 4a5 5 0 1 0 1 6V8H8" fill="none" stroke="#fff" stroke-width="2" /></svg></span>
        </div>
        <div class="relative flex items-center gap-1.5 pr-1">
            <svg class="size-1.5 rotate-180"><use href="#chev" /></svg>
            <span class="size-1.5 bg-white/60 rounded-sm"></span>
            <span class="size-1.5 border border-white/60"></span>
            <svg class="size-2 ml-1.5"><use href="#sound" /></svg>
            <span class="mx-1">E</span>
            <span class="text-right text-[6px] leading-[9px] mr-1">9:48 PM<br>2026-02-16</span>
            <svg class="size-3" viewBox="0 0 16 16"><path d="M1 2h14v9H8l-3 3v-3H1z" fill="#fff" /><circle cx="12" cy="11" r="4.500" fill="#333" stroke="#999" /><path d="M12 9v4" stroke="#fff" stroke-width="1.300" /></svg>
        </div>
    </footer>

    <!-- Stream overlay -->
    <div class="absolute right-[18px] bottom-2 w-[100px] pointer-events-none">
        <svg class="w-[100px] h-[88px]" viewBox="1164 612 100 88">
            <path d="M1203 630l-35 61 22-11 2-10 13-25z" fill="#fff" stroke="#ccc" />
            <path d="M1203 672q34-4 60 21-22-10-60-11z" fill="#f5f5f5" stroke="#ddd" />
            <path d="M1220 653C1210 654 1205 645 1205 637C1205 624 1215 615 1228 615C1240 615 1247 624 1247 637C1247 651 1241 663 1236 674L1228 672C1234 661 1236 650 1236 641C1236 631 1232 626 1223 626C1214 627 1211 634 1213 641C1214 646 1216 649 1220 653z" fill="#33dcd8" />
            <path d="M1204 653C1202 666 1203 677 1209 682C1215 685 1222 684 1226 683C1223 691 1216 695 1208 694C1198 693 1192 683 1192 675C1192 667 1197 660 1204 653z" fill="#33dcd8" />
        </svg>
        <p class="pl-2 text-[14px] leading-[12px] font-['Lato',sans-serif] font-semibold text-white whitespace-nowrap drop-shadow-[0_0_1px_#000]">OUTLAW <span class="text-[#33dcd8]">RP</span></p>
    </div>

    <!-- Script -->
    <script>
        const letters = ['A', 'B', 'C', 'D', 'E', 'F', 'G', 'H', 'I', 'J', 'K', 'L', 'M', 'N', 'O', 'P', 'Q', 'R', 'S', 'T', 'U', 'V', 'W', 'X', 'Y', 'Z', 'AA', 'AB', 'AC', 'AD', 'AE', 'AF', 'AG'];
        const data = {
            5: ['16/02/2026', 'Kick', '10.00', '1', '', '', '2026'],
            6: ['17/02/2026', 'Kick', '8.00', '1', '', '', '2026'],
            7: ['18/02/2026', '', '5.00', '1', '', '', '2026'],
        };
        const headings = ['التاريخ', 'عنوان/منصة البث', 'عدد الساعات', 'عدد البثوث', 'ملاحظات', 'الشهر (تلقائي)', 'السنة (تلقائي)'];
        const rowHead = 'bg-[#f5f5f5] border-r border-b border-[#e2e2e2] text-right pr-0.5 font-normal leading-[9px]';

        // Columns H to AG share one width
        document.getElementById('cols').insertAdjacentHTML('beforeend', '<col class="w-[32px]">'.repeat(26));

        document.getElementById('letters').innerHTML = '<th class="border-b border-r border-[#ccc]"></th>' + letters.map(l =>
            l === 'D'
                ? '<th class="font-normal leading-[8px] bg-[#c9ecd3] border-b border-[#1f7a43] text-[#1f7a43]">D</th>'
                : `<th class="font-normal leading-[8px] border-b border-r border-b-[#ccc] border-r-[#e5e5e5]">${l}</th>`
        ).join('');

        let html = `
            <tr class="h-[19px]"><th class="${rowHead}">1</th><td colspan="7" dir="rtl" class="text-center text-[8px] font-bold text-[#1f4468]">سجل البثوث (أضف صفًا لكل بث)</td></tr>
            <tr class="h-[13px]"><th class="${rowHead}">2</th><td colspan="7" dir="rtl" class="text-center text-[6px] text-[#777]">طريقة الاستخدام: بعد كل بث، أدخل التاريخ + اسم/عنوان البث + عدد الساعات + عدد البثوث (عادةً 1). الملخص يحسب تلقائيًا.</td></tr>
            <tr class="h-[10px]"><th class="${rowHead}">3</th></tr>`;

        // Table heading row with filter buttons
        html += '<tr class="h-[18px]"><th class="bg-[#c9ecd3] border-r border-[#1f7a43] text-[#1f7a43] font-normal text-right pr-0.5">4</th>' + headings.map((h, i) => `
            <th class="bg-[#1f4e78] text-white text-[5px] overflow-hidden ${i === 3 ? 'border border-[#6fae7d]' : 'border-r border-[#c7d5e2]'}">
                <span class="flex items-center pr-px"><span dir="rtl" class="flex-1 text-center">${h}</span>${i < 5 ? '<button aria-label="Filter" class="size-2 shrink-0 bg-white text-[#777] flex items-center justify-center"><svg class="size-1"><use href="#chev" /></svg></button>' : ''}</span>
            </th>`).join('') + '</tr>';

        for (let r = 5; r <= 50; r++) {
            const values = data[r] || ['', '', '', '', '', '', ''];
            html += `<tr class="h-[10px]"><th class="${rowHead}">${r}</th>` + values.map((v, i) => {
                const fill = i > 4 ? 'bg-white border-b border-r border-[#e4e4e4]' : r % 2 ? 'bg-[#b8cce4] text-[#444]' : 'bg-[#dce6f1] text-[#444] border-r border-[#d3dde9]';
                return `<td class="${fill} ${i === 1 ? 'text-right pr-px' : 'text-center'} leading-[9px]">${v}</td>`;
            }).join('') + '</tr>';
        }
        document.getElementById('rows').innerHTML = html;

        document.getElementById('values').innerHTML = ['Select All', '(Blanks)', '1'].map(v => `
            <label class="h-3.5 flex items-center gap-1">
                <span class="grid"><input type="checkbox" checked class="appearance-none size-2 border border-[#777] rounded-[1px] col-start-1 row-start-1"><svg class="size-2 p-px col-start-1 row-start-1 pointer-events-none"><use href="#check" /></svg></span>${v}
            </label>`).join('');
    </script>
</body>

</html>
